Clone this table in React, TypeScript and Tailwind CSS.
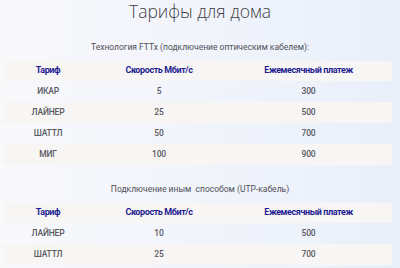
const fttx = [
  { name: "ИКАР", speed: "5", price: "300" },
  { name: "ЛАЙНЕР", speed: "25", price: "500" },
  { name: "ШАТТЛ", speed: "50", price: "700" },
  { name: "МИГ", speed: "100", price: "900" },
];

const utp = [
  { name: "ЛАЙНЕР", speed: "10", price: "500" },
  { name: "ШАТТЛ", speed: "25", price: "700" },
];

type Row = { name: string; speed: string; price: string };

function TariffTable({ rows }: { rows: Row[] }) {
  return (
    <div className="mx-[3px] w-[389px]">
      <div className="grid h-[20px] grid-cols-[90px_132px_167px] items-center bg-[#f7f6f4] text-[9px] font-bold tracking-[-0.4px] text-[#1e1c92]">
        <span className="text-center">Тариф</span>
        <span className="text-center">Скорость Мбит/с</span>
        <span className="text-center">Ежемесячный платеж</span>
      </div>
      {rows.map((r, i) => (
        <div
          key={r.name}
          className={`grid h-[21px] grid-cols-[90px_132px_167px] items-center text-[8.5px] font-medium tracking-[-0.2px] text-[#585862] ${
            i % 2 === 1 ? "bg-[#f7f6f4]" : ""
          }`}
        >
          <span className="text-center">{r.name}</span>
          <span className="text-center">{r.speed}</span>
          <span className="text-center">{r.price}</span>
        </div>
      ))}
    </div>
  );
}

export default function App() {
  return (
    <div
      className="h-[268px] w-[400px] overflow-hidden bg-gradient-to-r from-[#f9f9fc] to-[#e9effa]"
      style={{ fontFamily: 'Roboto, "Noto Sans", sans-serif' }}
    >
      <h1
        className="text-center text-[17.5px] leading-[22px] font-light text-[#3c3c42]"
        style={{ fontFamily: '"Open Sans", "Noto Sans", sans-serif' }}
      >
        Тарифы для дома
      </h1>
      <p className="mt-[19px] mb-[8px] text-center text-[8.5px] leading-[12px] text-[#505058]">
        Технология FTTx (подключение оптическим кабелем):
      </p>
      <TariffTable rows={fttx} />
      <p className="mt-[18px] mb-[8px] text-center text-[8.5px] leading-[12px] text-[#505058]">
        Подключение иным&nbsp; способом (UTP-кабель)
      </p>
      <TariffTable rows={utp} />
    </div>
  );
}
